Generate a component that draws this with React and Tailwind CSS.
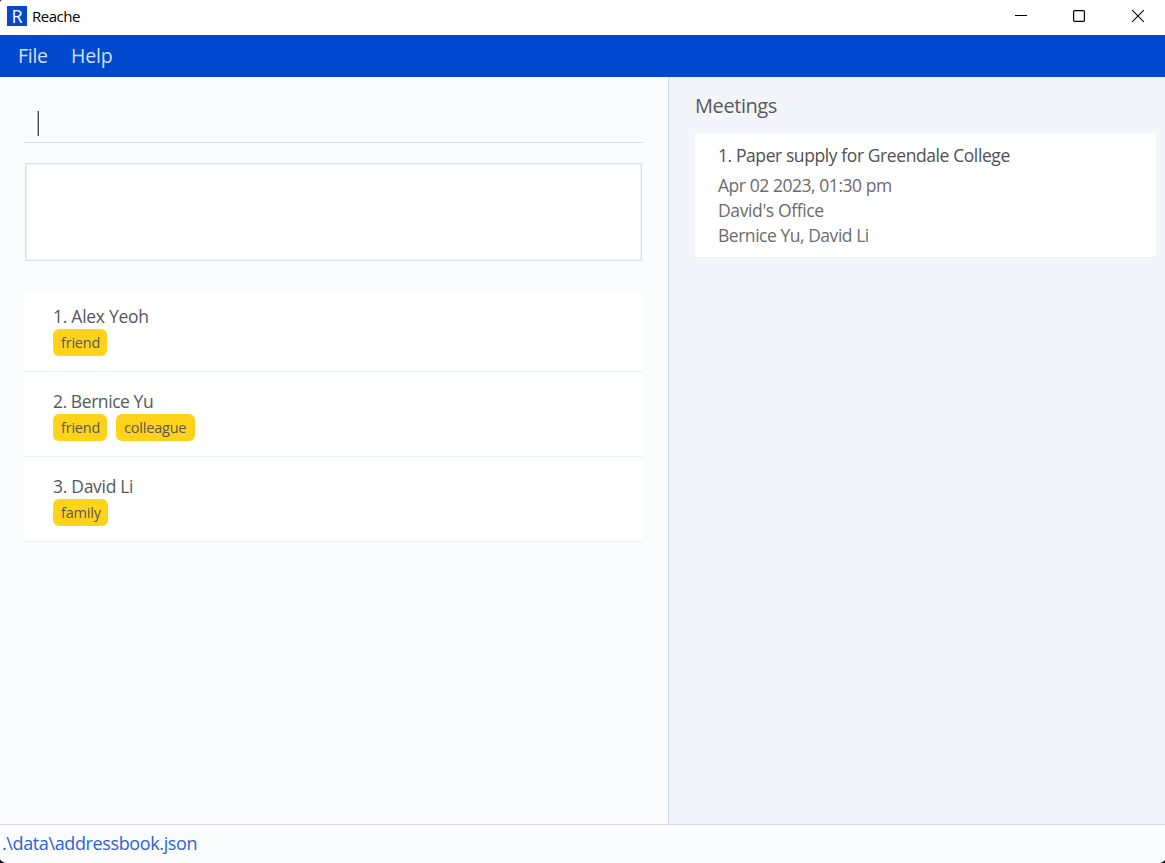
const contacts = [
  { name: "1. Alex Yeoh", nameCls: "tracking-[-0.27px]", tags: [["friend", "w-[54px]"]] },
  { name: "2. Bernice Yu", nameCls: "tracking-[-0.43px]", tags: [["friend", "w-[54px]"], ["colleague", "w-[79px]"]] },
  { name: "3. David Li", nameCls: "tracking-[-0.3px]", tags: [["family", "w-[55px]"]] },
];

function TitleBar() {
  return (
    <header className="flex h-[35px] shrink-0 items-center bg-white pl-[7px]">
      <div className="-mt-[3px] flex size-5 items-center justify-center bg-[#0049cf] text-[18px] leading-5 text-white">R</div>
      <h1 className="-mt-[4px] ml-[5px] text-[15px] leading-5 tracking-[-0.5px] text-black">Reache</h1>
      <div className="ml-auto flex pr-[20px] text-black">
        <svg className="mr-[44px] h-[14px] w-[14px] -mt-[5px]" viewBox="0 0 14 14">
          <path d="M1 7.5H13" stroke="currentColor" fill="none" />
        </svg>
        <svg className="mr-[45px] h-[14px] w-[14px] -mt-[5px]" viewBox="0 0 14 14">
          <rect x="1.6" y="2.6" width="10.8" height="10.8" rx="1" stroke="currentColor" strokeWidth="1.2" fill="none" />
        </svg>
        <svg className="h-[14px] w-[14px] -mt-[5px]" viewBox="0 0 14 14">
          <path d="M1.2 2.2L12.8 13.8M12.8 2.2L1.2 13.8" stroke="currentColor" strokeWidth="1.1" fill="none" />
        </svg>
      </div>
    </header>
  );
}

function ContactCard({ name, nameCls, tags }) {
  return (
    <li className="flex h-20 flex-col border-b border-[#edf0f4] bg-white pt-3 pl-[29px]">
      <span className={`h-[25px] text-[17.5px] leading-[25px] text-[#585858] ${nameCls}`}>{name}</span>
      <div className="flex gap-[9px]">
        {tags.map(([tag, width]) => (
          <span
            key={tag}
            className={`flex h-[27px] items-center rounded-[6px] bg-[#ffd31a] pl-2 text-[14.5px] tracking-[-0.2px] text-[#585858] ${width}`}
          >
            {tag}
          </span>
        ))}
      </div>
    </li>
  );
}

export default function App() {
  return (
    <div className="relative flex h-[863px] w-[1165px] flex-col overflow-hidden bg-[#fbfcfe] whitespace-nowrap font-['Open_Sans','Noto_Sans',sans-serif]">
      <TitleBar />
      <nav className="flex h-[42px] shrink-0 items-center bg-[#0049cf] pl-[18px] text-[19.5px] text-[#d4e0f7]">
        <span className="w-[53px] tracking-[-0.3px]">File</span>
        <span className="tracking-[-0.2px]">Help</span>
      </nav>
      <main className="flex min-h-0 flex-1">
        <section className="flex w-[668px] flex-col pt-[27px] pr-[25px] pl-6">
          <div className="flex h-[39px] items-start border-b border-[#d5dbe8] pt-[7px] pl-[13px]">
            <span className="h-[25px] w-[2px] border-r border-[#505050] bg-[#b4b4b4]" />
          </div>
          <div className="mt-5 mr-px ml-px h-[98px] border border-[#dbe0ea] bg-white shadow-[inset_0_0_0_1px_#f0f1f6]" />
          <ul className="mt-[31px] flex flex-col gap-[5px]">
            {contacts.map((c) => (
              <ContactCard key={c.name} {...c} />
            ))}
          </ul>
        </section>
        <aside className="flex-1 border-l border-[#d5dbe8] bg-[#f4f5fa] pt-4 pr-[9px] pl-[26px]">
          <h2 className="h-10 text-[20px] leading-[26px] tracking-[-0.42px] text-[#585858]">Meetings</h2>
          <article className="flex h-[125px] flex-col border-b border-[#edf0f4] bg-white pt-[10px] pl-[23px] text-[17.5px] leading-[25px] text-[#6c6c6c]">
            <h3 className="mb-[5px] tracking-[-0.41px] text-[#505050]">1. Paper supply for Greendale College</h3>
            <p className="tracking-[-0.45px]">Apr 02 2023, 01:30 pm</p>
            <p className="tracking-[-0.38px]">David's Office</p>
            <p className="tracking-[-0.47px]">Bernice Yu, David Li</p>
          </article>
        </aside>
      </main>
      <footer className="flex h-[39px] shrink-0 items-center border-t border-[#d5dbe8] pb-[2px] pl-[2px] text-[18px] tracking-[-0.38px] text-[#2a62d4]">
        .\data\addressbook.json
      </footer>
      <svg className="absolute bottom-0 left-0 h-[4px] w-[6px]" viewBox="0 0 6 4">
        <path d="M0 0Q1.5 3 6 4H0Z" fill="#111" />
      </svg>
      <svg className="absolute right-0 bottom-0 h-[3px] w-[5px]" viewBox="0 0 5 3">
        <path d="M5 0Q4 2 0 3H5Z" fill="#111" />
      </svg>
      <svg className="absolute top-0 left-0 h-[2px] w-[2px]" viewBox="0 0 2 2">
        <path d="M0 0H2L0 2Z" fill="#555" />
      </svg>
    </div>
  );
}
